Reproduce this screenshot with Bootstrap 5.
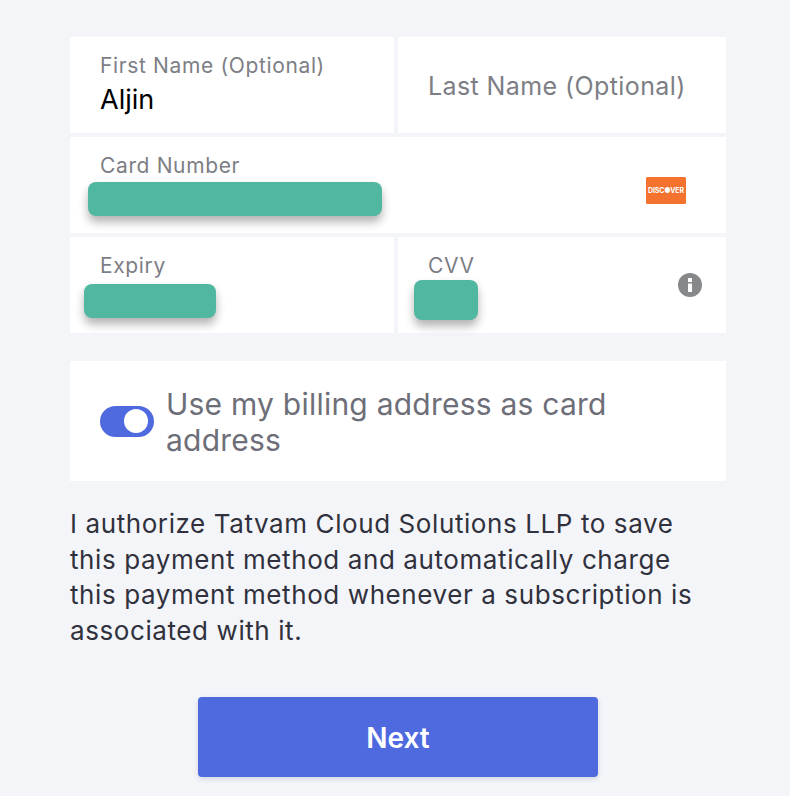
<!DOCTYPE html>
<html lang="en">
<head>
<meta charset="utf-8">
<title>Payment</title>
<link rel="stylesheet" href="https://cdn.jsdelivr.net/npm/bootstrap@5.3.0/dist/css/bootstrap.min.css">
<style>
html, body { height: 100%; }
body { background: #f4f5f9; font-family: Inter, "Liberation Sans", sans-serif; color: #30313d; overflow: hidden; }
.pay-wrap { padding: 37px 64px 0 70px; }
.pay-grid { display: grid; grid-template-columns: 324px 328px; gap: 4px; }
.pay-field { background: #fff; height: 96px; position: relative; padding: 15px 30px 0; }
.pay-wide { grid-column: 1 / 3; }
.pay-center { display: flex; align-items: center; padding-top: 1px; }
.pay-label { font-size: 21px; line-height: 27px; color: #7d7e85; letter-spacing: .64px; }
.pay-big { font-size: 25px; line-height: 30px; color: #7d7e85; letter-spacing: .4px; }
.pay-value { font-size: 27px; line-height: 34px; margin-top: 4px; color: #000; }
.pay-mask { position: absolute; background: #50b7a0; border-radius: 8px; box-shadow: 0 6px 10px rgba(0,0,0,.3); }
.mask-card { left: 18px; top: 45px; width: 294px; height: 34px; }
.mask-exp { left: 14px; top: 47px; width: 132px; height: 34px; }
.mask-cvv { left: 16px; top: 43px; width: 64px; height: 40px; }
.pay-discover { position: absolute; left: 576px; top: 40px; width: 40px; height: 27px; background: #f3722e; border-radius: 1.5px; color: #fff; font-size: 7px; font-weight: 700; line-height: 27px; text-align: center; letter-spacing: -.15px; }
.pay-info { position: absolute; left: 280px; top: 36px; width: 24px; height: 24px; }
.pay-switchbox { background: #fff; margin-top: 28px; height: 120px; padding: 0 30px; gap: 12px; }
.pay-track { flex: 0 0 54px; height: 31px; border-radius: 16px; background: #4f69df; position: relative; }
.pay-knob { position: absolute; right: 6px; top: 3.5px; width: 24px; height: 24px; border-radius: 50%; background: #fff; }
.pay-switchtext { font-size: 30px; line-height: 36px; color: #6d6e78; letter-spacing: .23px; margin-top: 2px; }
.pay-legal { font-size: 26px; line-height: 35.5px; color: #30313d; margin: 25px 0 0; padding-right: 20px; letter-spacing: .59px; }
.pay-next { display: block; width: 400px; height: 80px; margin: 49px 0 0 128px; padding-top: 8px; background: #4f69df; border: 0; border-radius: 4px; color: #fff; font-size: 28px; font-weight: 600; box-shadow: 0 2px 5px rgba(50,50,93,.15); }
.pay-next:hover { background: #4f69df; color: #fff; }
</style>
</head>
<body>
<div class="pay-wrap">
  <div class="pay-grid">
    <div class="pay-field">
      <div class="pay-label">First Name (Optional)</div>
      <div class="pay-value">Aljin</div>
    </div>
    <div class="pay-field pay-center">
      <div class="pay-big">Last Name (Optional)</div>
    </div>
    <div class="pay-field pay-wide">
      <div class="pay-label">Card Number</div>
      <div class="pay-mask mask-card"></div>
      <div class="pay-discover">DISC&#9679;VER</div>
    </div>
    <div class="pay-field">
      <div class="pay-label">Expiry</div>
      <div class="pay-mask mask-exp"></div>
    </div>
    <div class="pay-field">
      <div class="pay-label">CVV</div>
      <div class="pay-mask mask-cvv"></div>
      <svg class="pay-info" viewBox="0 0 24 24" aria-hidden="true"><circle cx="12" cy="12" r="12" fill="#87888a"/><rect x="10" y="5" width="4" height="4" rx=".6" fill="#fff"/><rect x="10" y="10.5" width="4" height="8.5" rx=".6" fill="#fff"/></svg>
    </div>
  </div>
  <div class="pay-switchbox d-flex align-items-center">
    <div class="pay-track"><div class="pay-knob"></div></div>
    <div class="pay-switchtext">Use my billing address as card address</div>
  </div>
  <p class="pay-legal">I authorize Tatvam Cloud Solutions LLP to save this payment method and automatically charge this payment method whenever a subscription is associated with it.</p>
  <button type="button" class="btn pay-next">Next</button>
</div>
<script src="https://cdn.jsdelivr.net/npm/bootstrap@5.3.0/dist/js/bootstrap.bundle.min.js"></script>
</body>
</html>
